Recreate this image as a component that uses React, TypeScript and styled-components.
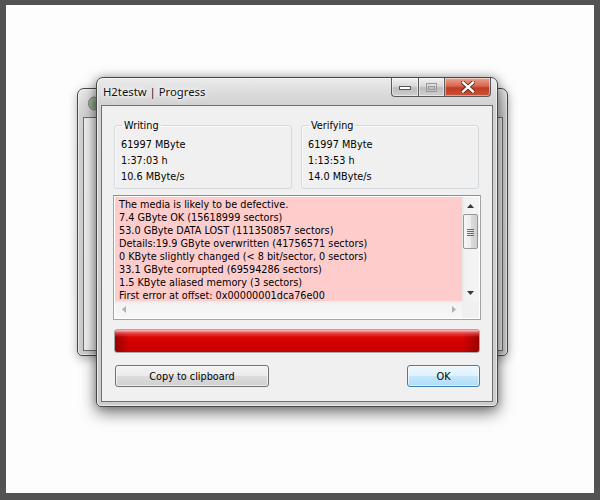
import React from "react";
import styled, { createGlobalStyle } from "styled-components";

const Global = createGlobalStyle`
  html, body { margin: 0; padding: 0; background: #fff; }
  body { font-family: "DejaVu Sans", "Liberation Sans", sans-serif; color: #000; }
`;

const Frame = styled.div`
  position: relative;
  width: 600px;
  height: 500px;
  box-sizing: border-box;
  border-style: solid;
  border-color: #535353;
  border-width: 5px 6px 7px 6px;
  background: #fdfdfd;
  overflow: hidden;
`;

const WindowShell = styled.div<{ $x: number; $y: number; $w: number; $h: number; $front?: boolean }>`
  position: absolute;
  left: ${(p) => p.$x}px;
  top: ${(p) => p.$y}px;
  width: ${(p) => p.$w}px;
  height: ${(p) => p.$h}px;
  box-sizing: border-box;
  display: flex;
  flex-direction: column;
  border: 1px solid #474747;
  border-radius: 7px 7px 5px 5px;
  background: linear-gradient(180deg, #ececec 0px, #dcdcdc 14px, #d2d2d2 27px, #cdcdcd 100%);
  box-shadow: inset 0 0 0 1px rgba(255, 255, 255, 0.55),
    ${(p) => (p.$front ? "0 6px 16px rgba(0,0,0,0.5), 0 0 8px rgba(0,0,0,0.25)" : "0 3px 10px rgba(0,0,0,0.3)")};
`;

const TitleBar = styled.div`
  height: 27px;
  flex: none;
  display: flex;
  justify-content: space-between;
  align-items: flex-start;
  padding: 0 6px 0 6px;
`;

const Title = styled.div`
  margin-top: 6px;
  font-family: "Noto Sans", "DejaVu Sans", sans-serif;
  font-size: 11.3px;
  line-height: 16px;
  color: #111;
  text-shadow: 0 0 6px #fff, 0 0 10px #fff, 0 0 3px #fff;
`;

const CaptionGroup = styled.div`
  display: flex;
  height: 19px;
`;

const CaptionButton = styled.div<{ $w: number; $kind: "min" | "max" | "close" }>`
  width: ${(p) => p.$w}px;
  height: 19px;
  box-sizing: border-box;
  display: flex;
  align-items: center;
  justify-content: center;
  border: 1px solid #5a5a5a;
  border-top: none;
  margin-left: -1px;
  border-radius: ${(p) => (p.$kind === "min" ? "0 0 0 4px" : p.$kind === "close" ? "0 0 4px 0" : "0")};
  background: ${(p) =>
    p.$kind === "close"
      ? "linear-gradient(180deg, #e9a493 0%, #d8664e 45%, #c23b22 55%, #c9523a 100%)"
      : "linear-gradient(180deg, #f2f2f2 0%, #d9d9d9 45%, #bdbdbd 55%, #cfcfcf 100%)"};
  box-shadow: inset 0 0 0 1px rgba(255, 255, 255, 0.45);
`;

const Client = styled.div`
  flex: 1;
  margin: 0 4px 4px 4px;
  border: 1px solid #6f6f6f;
  background: #f0f0f0;
  display: flex;
  flex-direction: column;
  padding: 13px 12px 13px 12px;
  font-size: 9.7px;
`;

const BackClient = styled.div`
  flex: 1;
  margin: 0 4px 4px 5px;
  border: 1px solid #6f6f6f;
  background: #f0f0f0;
`;

const BackTitle = styled.div`
  height: 28px;
  flex: none;
  padding: 6px 0 0 9px;
  box-sizing: border-box;
`;

const GroupRow = styled.div`
  display: grid;
  grid-template-columns: 1fr 1fr;
  column-gap: 9px;
  margin-right: 1px;
`;

const Group = styled.fieldset`
  margin: 0;
  min-width: 0;
  padding: 5px 6px 3px 6px;
  border: 1px solid #d3d9dd;
  border-radius: 3px;
  box-shadow: inset 1px 1px 0 #fafafa;
`;

const Legend = styled.legend`
  padding: 0 2px;
  margin-left: 1px;
  line-height: 13px;
  font-size: 9.7px;
`;

const Value = styled.div`
  line-height: 16px;
  white-space: nowrap;
`;

const TextBox = styled.div`
  margin: 6px -1px 0 -1px;
  border: 1px solid #a3a3a3;
  border-top-color: #8e8e8e;
  padding: 1px;
  background: #fff;
  display: grid;
  grid-template-columns: 1fr 17px;
  grid-template-rows: 104px 17px;
`;

const Report = styled.div`
  background: #ffcccc;
  padding: 1px 4px 0 4px;
  line-height: 13px;
  white-space: pre;
  overflow: hidden;
`;

const VScroll = styled.div`
  display: flex;
  flex-direction: column;
  background: linear-gradient(90deg, #e6e6e6 0px, #f2f2f2 3px, #f4f4f4 100%);
`;

const ArrowBox = styled.div<{ $w?: number; $h?: number }>`
  flex: none;
  width: ${(p) => p.$w ?? 17}px;
  height: ${(p) => p.$h ?? 17}px;
  display: flex;
  align-items: center;
  justify-content: center;
`;

const Thumb = styled.div`
  height: 35px;
  margin: 0 1px;
  box-sizing: border-box;
  border: 1px solid #979797;
  border-radius: 2px;
  background: linear-gradient(90deg, #f7f7f7 0%, #ececec 50%, #dcdcdc 52%, #cfcfcf 100%);
  display: flex;
  align-items: center;
  justify-content: center;
`;

const Spacer = styled.div`
  flex: 1;
`;

const HScroll = styled.div`
  display: flex;
  justify-content: space-between;
  background: linear-gradient(180deg, #e8e8e8 0px, #f3f3f3 3px, #f7f7f7 100%);
`;

const Corner = styled.div`
  background: #f0f0f0;
`;

const Progress = styled.div`
  margin-top: 9px;
  height: 24px;
  box-sizing: border-box;
  border: 1px solid #a8a8a8;
  border-radius: 3px;
  background:
    linear-gradient(180deg, rgba(255, 200, 200, 0.95) 0px, rgba(245, 110, 110, 0.6) 3px, rgba(255, 60, 60, 0) 7px),
    linear-gradient(90deg, rgba(110, 0, 0, 0.55) 0px, rgba(110, 0, 0, 0) 14px, rgba(110, 0, 0, 0) calc(100% - 16px), rgba(110, 0, 0, 0.55) 100%),
    linear-gradient(180deg, #e01010 0%, #d40000 55%, #c80000 100%);
`;

const ButtonRow = styled.div`
  margin-top: 12px;
  padding-left: 1px;
  display: flex;
  justify-content: space-between;
`;

const Button = styled.div<{ $w: number; $default?: boolean }>`
  width: ${(p) => p.$w}px;
  height: 22px;
  box-sizing: border-box;
  display: flex;
  align-items: center;
  justify-content: center;
  border: 1px solid ${(p) => (p.$default ? "#3c7fb1" : "#707070")};
  border-radius: 3px;
  font-size: 9.7px;
  background: ${(p) =>
    p.$default
      ? "linear-gradient(180deg, #edf7fd 0%, #e0f2fc 48%, #c4e8fc 50%, #b0dcf5 100%)"
      : "linear-gradient(180deg, #f3f3f3 0%, #ebebeb 48%, #dddddd 50%, #cfcfcf 100%)"};
  box-shadow: inset 0 0 0 1px rgba(255, 255, 255, 0.6);
`;

const Tri = ({ dir, color }: { dir: "up" | "down" | "left" | "right"; color: string }) => {
  const pts =
    dir === "up" ? "0,4 7,4 3.5,0" : dir === "down" ? "0,0 7,0 3.5,4" : dir === "left" ? "4,0 4,7 0,3.5" : "0,0 0,7 4,3.5";
  const vertical = dir === "up" || dir === "down";
  return (
    <svg width={vertical ? 7 : 4} height={vertical ? 4 : 7} viewBox={vertical ? "0 0 7 4" : "0 0 4 7"}>
      <polygon points={pts} fill={color} />
    </svg>
  );
};

const lines = [
  "The media is likely to be defective.",
  "7.4 GByte OK (15618999 sectors)",
  "53.0 GByte DATA LOST (111350857 sectors)",
  "Details:19.9 GByte overwritten (41756571 sectors)",
  "0 KByte slightly changed (< 8 bit/sector, 0 sectors)",
  "33.1 GByte corrupted (69594286 sectors)",
  "1.5 KByte aliased memory (3 sectors)",
  "First error at offset: 0x00000001dca76e00",
];

export default function App() {
  return (
    <>
      <Global />
      <Frame>
        <WindowShell $x={71} $y={83} $w={431} $h={268}>
          <BackTitle>
            <svg width="14" height="16" viewBox="0 0 14 16">
              <ellipse cx="7" cy="8.5" rx="5.5" ry="6.5" fill="#a7aea6" stroke="#7c847b" />
              <ellipse cx="7.5" cy="10" rx="3" ry="3.5" fill="#7fae6c" opacity="0.8" />
            </svg>
          </BackTitle>
          <BackClient />
        </WindowShell>

        <WindowShell $x={90} $y={72} $w={402} $h={330} $front>
          <TitleBar>
            <Title>H2testw | Progress</Title>
            <CaptionGroup>
              <CaptionButton $w={28} $kind="min">
                <svg width="12" height="5" viewBox="0 0 12 5">
                  <rect x="0.5" y="1.5" width="11" height="3" fill="#fff" stroke="#555" />
                </svg>
              </CaptionButton>
              <CaptionButton $w={27} $kind="max">
                <svg width="11" height="9" viewBox="0 0 11 9">
                  <rect x="0.5" y="0.5" width="10" height="8" fill="none" stroke="#9a9a9a" />
                  <rect x="2.5" y="3.5" width="6" height="3" fill="none" stroke="#9a9a9a" />
                </svg>
              </CaptionButton>
              <CaptionButton $w={47} $kind="close">
                <svg width="14" height="12" viewBox="0 0 14 12">
                  <path d="M2 1.5 L12 10.5 M12 1.5 L2 10.5" stroke="#5a1e12" strokeWidth="4" strokeLinecap="square" />
                  <path d="M2 1.5 L12 10.5 M12 1.5 L2 10.5" stroke="#fff" strokeWidth="2.4" strokeLinecap="square" />
                </svg>
              </CaptionButton>
            </CaptionGroup>
          </TitleBar>
          <Client>
            <GroupRow>
              <Group>
                <Legend>Writing</Legend>
                <Value>61997 MByte</Value>
                <Value>1:37:03 h</Value>
                <Value>10.6 MByte/s</Value>
              </Group>
              <Group>
                <Legend>Verifying</Legend>
                <Value>61997 MByte</Value>
                <Value>1:13:53 h</Value>
                <Value>14.0 MByte/s</Value>
              </Group>
            </GroupRow>
            <TextBox>
              <Report>{lines.join("\n")}</Report>
              <VScroll>
                <ArrowBox>
                  <Tri dir="up" color="#3a3a3a" />
                </ArrowBox>
                <Thumb>
                  <svg width="7" height="8" viewBox="0 0 7 8">
                    <path d="M0 1.5 H7 M0 3.5 H7 M0 5.5 H7 M0 7.5 H7" stroke="#6a6a6a" strokeWidth="1" />
                  </svg>
                </Thumb>
                <Spacer />
                <ArrowBox>
                  <Tri dir="down" color="#3a3a3a" />
                </ArrowBox>
              </VScroll>
              <HScroll>
                <ArrowBox>
                  <Tri dir="left" color="#b0b0b0" />
                </ArrowBox>
                <ArrowBox>
                  <Tri dir="right" color="#b0b0b0" />
                </ArrowBox>
              </HScroll>
              <Corner />
            </TextBox>
            <Progress />
            <ButtonRow>
              <Button $w={154}>Copy to clipboard</Button>
              <Button $w={73} $default>
                OK
              </Button>
            </ButtonRow>
          </Client>
        </WindowShell>
      </Frame>
    </>
  );
}
